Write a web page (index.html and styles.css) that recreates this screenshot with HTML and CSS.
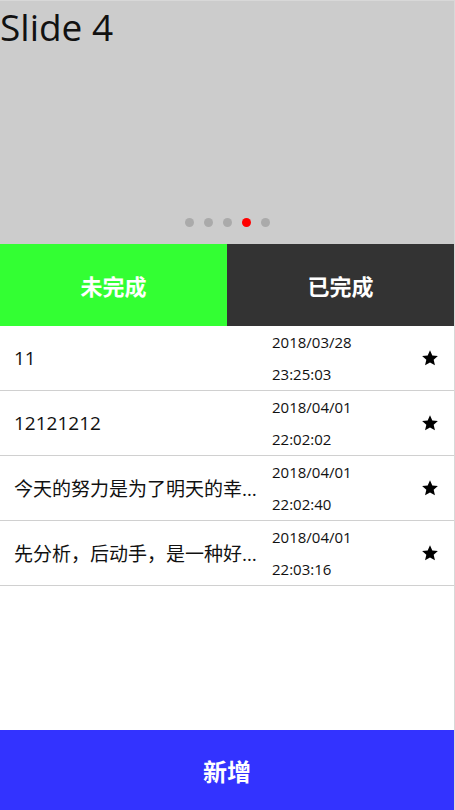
FILE: index.html
```html
<!DOCTYPE html>
<html lang="zh-CN">
<head>
<meta charset="utf-8">
<title>Todo</title>
<link rel="stylesheet" href="styles.css">
</head>
<body>
<div class="app">
  <div class="slider">
    <div class="slide-title">Slide 4</div>
    <div class="dots">
      <span class="dot"></span>
      <span class="dot"></span>
      <span class="dot"></span>
      <span class="dot active"></span>
      <span class="dot"></span>
    </div>
  </div>
  <div class="tabs">
    <div class="tab tab-todo">未完成</div>
    <div class="tab tab-done">已完成</div>
  </div>
  <ul class="list">
    <li class="row">
      <span class="title">11</span>
      <span class="time"><span>2018/03/28</span><span>23:25:03</span></span>
      <svg class="star" viewBox="0 0 24 24"><path d="M12 1.8l3.1 6.9 7.4.7-5.6 5 1.7 7.4L12 18l-6.6 3.8 1.7-7.4-5.6-5 7.4-.7z"/></svg>
    </li>
    <li class="row">
      <span class="title">12121212</span>
      <span class="time"><span>2018/04/01</span><span>22:02:02</span></span>
      <svg class="star" viewBox="0 0 24 24"><path d="M12 1.8l3.1 6.9 7.4.7-5.6 5 1.7 7.4L12 18l-6.6 3.8 1.7-7.4-5.6-5 7.4-.7z"/></svg>
    </li>
    <li class="row">
      <span class="title">今天的努力是为了明天的幸福，加油</span>
      <span class="time"><span>2018/04/01</span><span>22:02:40</span></span>
      <svg class="star" viewBox="0 0 24 24"><path d="M12 1.8l3.1 6.9 7.4.7-5.6 5 1.7 7.4L12 18l-6.6 3.8 1.7-7.4-5.6-5 7.4-.7z"/></svg>
    </li>
    <li class="row">
      <span class="title">先分析，后动手，是一种好习惯哦</span>
      <span class="time"><span>2018/04/01</span><span>22:03:16</span></span>
      <svg class="star" viewBox="0 0 24 24"><path d="M12 1.8l3.1 6.9 7.4.7-5.6 5 1.7 7.4L12 18l-6.6 3.8 1.7-7.4-5.6-5 7.4-.7z"/></svg>
    </li>
  </ul>
  <div class="add">新增</div>
</div>
</body>
</html>
```
FILE: styles.css
```css
* { box-sizing: border-box; }
html, body { margin: 0; padding: 0; }
body {
  font-family: "Open Sans", "Noto Sans CJK SC", sans-serif;
  background: #fff;
  color: #000;
}
.app {
  width: 455px;
  height: 810px;
  border-top: 1px solid #d8d8d8;
  border-right: 1px solid #d8d8d8;
  display: flex;
  flex-direction: column;
  overflow: hidden;
}
.slider {
  height: 243px;
  background: #cccccc;
  display: flex;
  flex-direction: column;
  justify-content: space-between;
  flex-shrink: 0;
}
.slide-title {
  font-size: 37px;
  line-height: 52px;
  margin-top: 0;
  color: #111;
}
.dots {
  display: flex;
  justify-content: center;
  gap: 10px;
  padding-bottom: 17px;
  padding-left: 0;
}
.dot {
  width: 9px;
  height: 9px;
  border-radius: 50%;
  background: #aaaaaa;
}
.dot.active { background: #ff0000; }
.tabs {
  display: flex;
  height: 82px;
  flex-shrink: 0;
}
.tab {
  flex: 1;
  display: flex;
  align-items: center;
  justify-content: center;
  color: #fff;
  font-size: 22px;
  font-weight: bold;
  font-family: "Noto Sans CJK SC", sans-serif;
}
.tab-todo { background: #33ff33; }
.tab-done { background: #333333; }
.list {
  list-style: none;
  margin: 0;
  padding: 0;
  flex: 1;
}
.row {
  height: 65px;
  border-bottom: 1px solid #d0d0d0;
  display: flex;
  align-items: center;
  padding-left: 14px;
  padding-right: 15px;
}
.title {
  width: 250px;
  margin-right: 8px;
  font-size: 19px;
  font-family: "Open Sans", "Noto Sans CJK SC", sans-serif;
  white-space: nowrap;
  overflow: hidden;
  text-overflow: ellipsis;
  color: #111;
}
.time {
  display: flex;
  flex-direction: column;
  font-size: 15px;
  line-height: 32px;
  color: #111;
}
.star {
  width: 18px;
  height: 18px;
  margin-left: auto;
  fill: #000;
}
.add {
  height: 80px;
  flex-shrink: 0;
  background: #3333ff;
  color: #fff;
  font-size: 24px;
  font-weight: bold;
  font-family: "Noto Sans CJK SC", sans-serif;
  display: flex;
  align-items: center;
  justify-content: center;
}
```
